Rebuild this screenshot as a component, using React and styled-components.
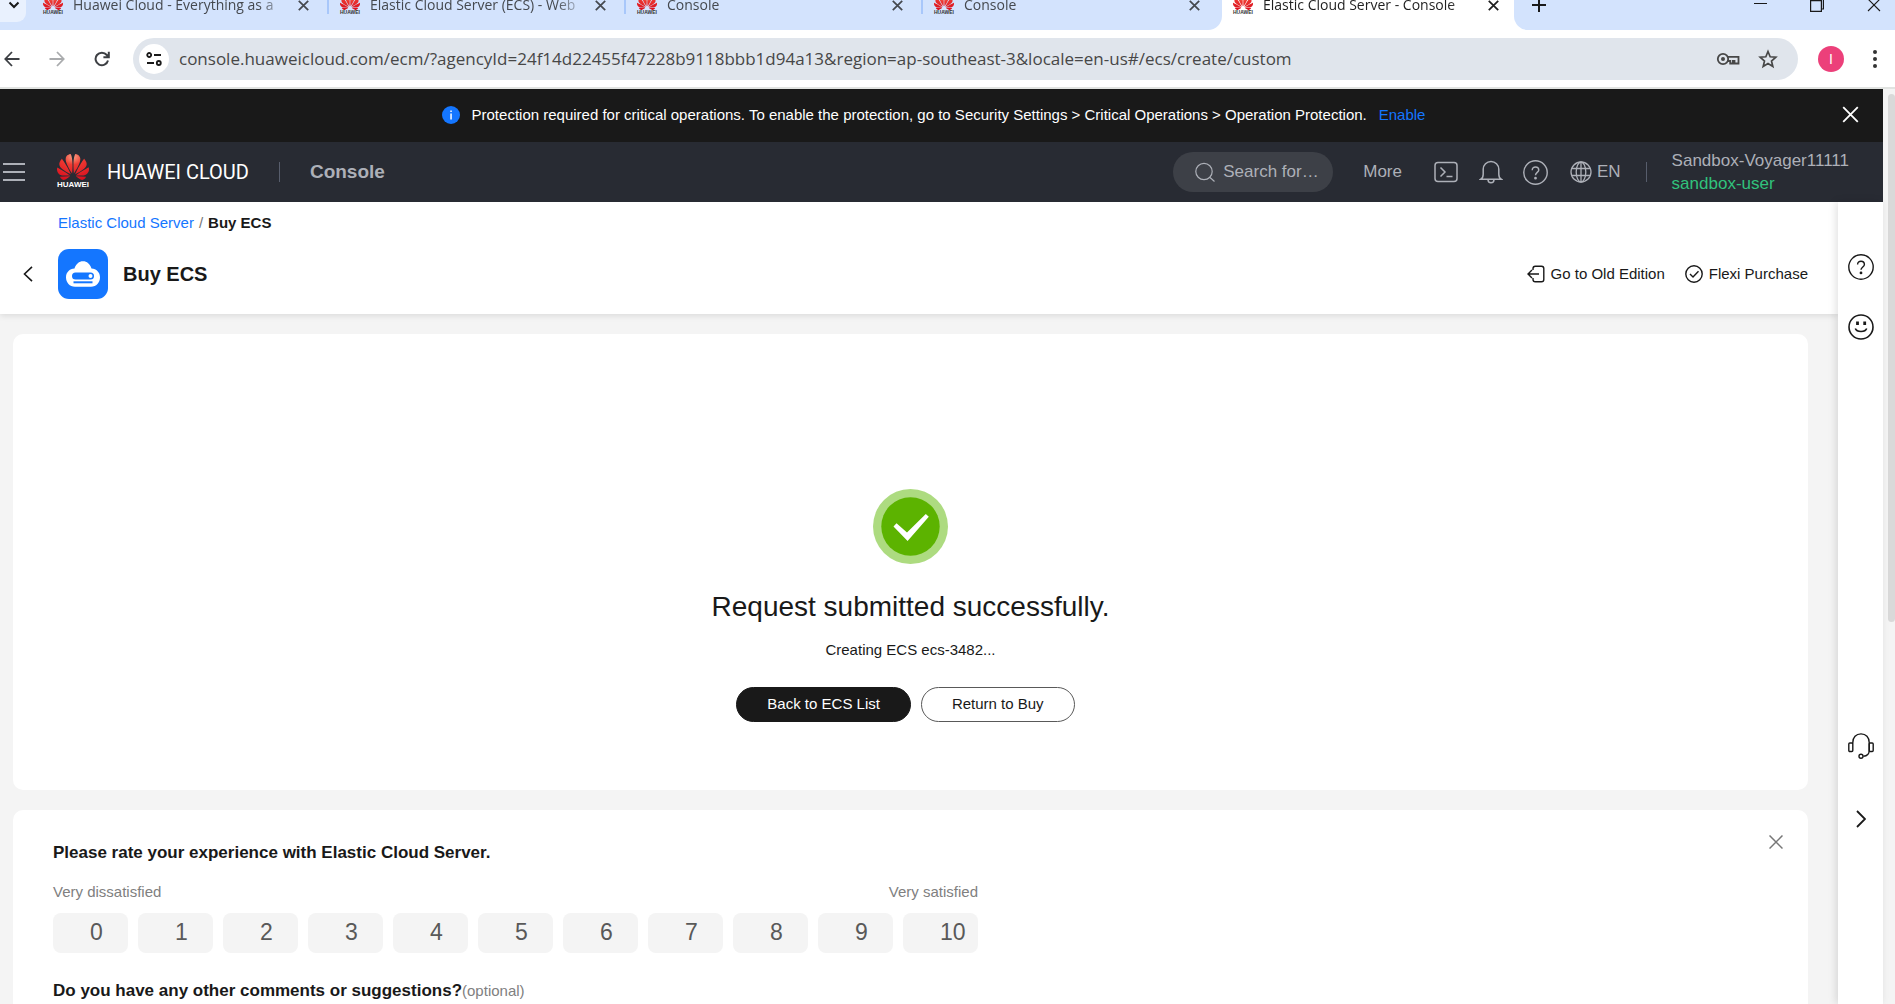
import React, { useState } from "react";
import styled, { createGlobalStyle } from "styled-components";

const ui = `"Liberation Sans", Arial, sans-serif`;
const chrome = `"Open Sans", "Noto Sans", sans-serif`;

const GlobalStyle = createGlobalStyle`
  *, *::before, *::after { box-sizing: border-box; }
  body { margin: 0; font-family: ${ui}; font-size: 15px; color: #191919; background: #f4f4f4; }
  button, input { font: inherit; color: inherit; }
  a { text-decoration: none; }
  h1, h2, h3, p { margin: 0; }
  svg { display: block; flex: none; }
`;

const Window = styled.div`
  height: 100vh;
  display: flex;
  flex-direction: column;
  overflow: hidden;
`;

/* ---------- browser tabs ---------- */

const TabStrip = styled.div`
  display: flex;
  height: 30px;
  flex: none;
  overflow: hidden;
  background: #fff;
  font-family: ${chrome};
`;

const TabGroup = styled.div`
  display: flex;
  align-items: flex-start;
  padding-right: 2px;
  background: #d3e3fd;
  border-radius: 0 0 14px 0;
`;

const TabSearch = styled.button`
  width: 26px;
  height: 22px;
  margin-right: 6px;
  padding: 0 0 12px 2px;
  border: 0;
  border-radius: 0 0 9px 0;
  background: #e9f1fe;
  display: flex;
  align-items: center;
  justify-content: center;
`;

const Tab = styled.div`
  display: flex;
  align-items: center;
  width: ${(p) => (p.$active ? 292 : 297)}px;
  height: 10px;
  padding-left: 11px;
  color: ${(p) => (p.$active ? "#1f1f1f" : "#45494f")};
`;

const TabTitle = styled.span`
  width: 208px;
  margin: 0 15px 0 10px;
  font-size: 14px;
  line-height: 20px;
  white-space: nowrap;
  overflow: hidden;
  mask-image: linear-gradient(to right, #000 186px, transparent 216px);
`;

const TabDivider = styled.span`
  width: 2px;
  height: 18px;
  margin-left: auto;
  background: #a8c7fa;
`;

const IconButton = styled.button`
  display: flex;
  align-items: center;
  justify-content: center;
  flex: none;
  padding: 0;
  border: 0;
  background: none;
  width: ${(p) => p.$size || 24}px;
  height: ${(p) => p.$size || 24}px;
`;

const StripEnd = styled.div`
  display: flex;
  align-items: center;
  flex: 1;
  padding: 0 9px 20px 13px;
  background: #d3e3fd;
  border-radius: 0 0 0 14px;
`;

const WindowControls = styled.div`
  display: flex;
  gap: 33px;
  margin-left: auto;
`;

/* ---------- browser toolbar ---------- */

const Toolbar = styled.div`
  display: flex;
  align-items: center;
  flex: none;
  height: 59px;
  padding-right: 18px;
  background: #fff;
  border-bottom: 2px solid #e1e3e1;
`;

const NavButtons = styled.div`
  display: flex;
  gap: 22px;
  margin-right: 20px;
  color: #3c3f43;
`;

const AddressBar = styled.form`
  display: flex;
  align-items: center;
  flex: 1;
  height: 42px;
  padding: 0 18px 0 6px;
  border-radius: 21px;
  background: #e0e5ec;
`;

const SiteInfo = styled(IconButton)`
  border-radius: 50%;
  background: #fff;
`;

const Address = styled.input`
  flex: 1;
  min-width: 0;
  margin-left: 10px;
  padding: 0;
  border: 0;
  outline: 0;
  color: #474747;
  background: none;
  font-family: ${chrome};
  font-size: 17px;
  line-height: 24px;
`;

const AddressActions = styled.div`
  display: flex;
  gap: 16px;
  color: #474747;
`;

const Avatar = styled.button`
  width: 26px;
  height: 26px;
  margin: 0 29px 0 20px;
  padding: 0;
  border: 0;
  border-radius: 50%;
  background: #ec407a;
  color: #fff;
  font-size: 14px;
  line-height: 26px;
`;

/* ---------- page shell ---------- */

const Viewport = styled.div`
  display: flex;
  flex: 1;
  min-height: 0;
`;

const Page = styled.div`
  display: flex;
  flex-direction: column;
  flex: 1;
  min-width: 0;
`;

const ScrollTrack = styled.div`
  width: 12px;
  padding: 5px 0 0 5px;
  background: #f4f4f4;
`;

const ScrollThumb = styled.div`
  height: 58%;
  border-radius: 4px;
  background: #d9d9d9;
`;

const Notice = styled.div`
  display: flex;
  align-items: center;
  flex: none;
  height: 53px;
  padding: 0 21px 2px 29px;
  background: #191919;
  color: #fff;
  line-height: 22px;
`;

const NoticeBody = styled.div`
  display: flex;
  align-items: center;
  justify-content: center;
  flex: 1;
  gap: 12px;
`;

const NoticeLink = styled.a`
  color: #1476ff;
`;

const Header = styled.header`
  display: flex;
  align-items: center;
  flex: none;
  height: 60px;
  padding: 0 34px 0 2px;
  background: #282b33;
  color: #adb0b8;
  font-size: 17px;
`;

const Brand = styled.a`
  display: flex;
  align-items: center;
  gap: 18px;
  margin-left: 31px;
  color: #fff;
  font-family: Roboto, sans-serif;
  font-size: 20px;
`;

const Mark = styled.span`
  display: flex;
  flex-direction: column;
  align-items: center;
  flex: none;
  width: ${(p) => (p.$small ? 20 : 32)}px;
  font-family: ${ui};
  font-weight: 700;
  font-size: ${(p) => (p.$small ? 5 : 8)}px;
  line-height: ${(p) => (p.$small ? 5 : 10)}px;
  color: ${(p) => (p.$small ? "#333" : "#fff")};
`;

const Divider = styled.span`
  width: 1px;
  height: 20px;
  background: #575d6c;
`;

const ConsoleLink = styled.a`
  color: #adb0b8;
  font-size: 19px;
  font-weight: 700;
`;

const BrandGroup = styled.div`
  display: flex;
  align-items: center;
  gap: 30px;
  margin-right: auto;
`;

const Search = styled.label`
  display: flex;
  align-items: center;
  gap: 8px;
  width: 160px;
  height: 40px;
  padding: 0 8px 0 22px;
  border-radius: 20px;
  background: #3d4047;
`;

const SearchInput = styled.input`
  flex: 1;
  min-width: 0;
  padding: 0;
  border: 0;
  outline: 0;
  background: none;
  color: #adb0b8;
  &::placeholder { color: #adb0b8; opacity: 1; }
`;

const More = styled.button`
  margin: 0 31px 0 30px;
  padding: 0;
  border: 0;
  background: none;
`;

const HeaderIcons = styled.div`
  display: flex;
  align-items: center;
  gap: 19px;
`;

const Language = styled.button`
  display: flex;
  align-items: center;
  gap: 5px;
  margin: 0 25px 0 2px;
  padding: 0;
  border: 0;
  background: none;
`;

const Account = styled.div`
  margin-left: 25px;
  line-height: 23px;
`;

const UserLink = styled.a`
  display: block;
  color: #31c27c;
`;

const Body = styled.div`
  display: flex;
  flex: 1;
  min-height: 0;
`;

const Content = styled.div`
  flex: 1;
  min-width: 0;
  overflow: hidden;
`;

const PageHead = styled.div`
  padding: 10px 30px 15px 18px;
  background: #fff;
  box-shadow: 0 2px 6px rgba(0, 0, 0, 0.1);
`;

const Breadcrumb = styled.nav`
  display: flex;
  gap: 5px;
  padding-left: 40px;
  line-height: 22px;
  color: #777;
`;

const CrumbLink = styled.a`
  color: #1476ff;
`;

const CrumbCurrent = styled.strong`
  color: #191919;
`;

const TitleRow = styled.div`
  display: flex;
  align-items: center;
  margin-top: 15px;
`;

const ServiceIcon = styled.span`
  display: flex;
  align-items: center;
  justify-content: center;
  width: 50px;
  height: 50px;
  margin: 0 15px 0 20px;
  border-radius: 11px;
  background: #1476ff;
`;

const Title = styled.h1`
  margin-right: auto;
  font-size: 20px;
  line-height: 28px;
`;

const HeadActions = styled.div`
  display: flex;
  gap: 20px;
`;

const HeadLink = styled.a`
  display: flex;
  align-items: center;
  gap: 6px;
  color: #191919;
  line-height: 22px;
`;

const Cards = styled.main`
  display: flex;
  flex-direction: column;
  gap: 20px;
  padding: 20px 30px 20px 13px;
`;

const ResultCard = styled.section`
  display: flex;
  flex-direction: column;
  align-items: center;
  padding: 155px 0 68px;
  border-radius: 10px;
  background: #fff;
`;

const ResultTitle = styled.h2`
  margin-top: 25px;
  font-size: 28px;
  font-weight: 400;
  line-height: 36px;
`;

const ResultText = styled.p`
  margin-top: 14px;
  line-height: 22px;
`;

const ResultButtons = styled.div`
  display: flex;
  gap: 10px;
  margin-top: 26px;
  padding-right: 10px;
`;

const Button = styled.button`
  height: 35px;
  padding: 0 30px 2px;
  border: 1px solid ${(p) => (p.$primary ? "#191919" : "#595959")};
  border-radius: 18px;
  background: ${(p) => (p.$primary ? "#191919" : "#fff")};
  color: ${(p) => (p.$primary ? "#fff" : "#191919")};
`;

const FeedbackCard = styled.section`
  display: flex;
  align-items: flex-start;
  justify-content: space-between;
  padding: 20px 20px 40px 40px;
  border-radius: 10px;
  background: #fff;
`;

const FeedbackForm = styled.form`
  padding-top: 11px;
`;

const Question = styled.h3`
  font-size: 17px;
  line-height: 24px;
`;

const Scale = styled.div`
  display: flex;
  justify-content: space-between;
  margin: 16px 0 10px;
  color: #808080;
  line-height: 22px;
`;

const Ratings = styled.div`
  display: flex;
  gap: 10px;
  margin-bottom: 26px;
`;

const Rating = styled.label`
  display: flex;
  align-items: center;
  width: 75px;
  height: 40px;
  padding: 0 0 2px 16px;
  border-radius: 8px;
  background: ${(p) => (p.$checked ? "#d6d6d6" : "#f4f4f4")};
  color: #595959;
  font-size: 23px;
`;

const RatingInput = styled.input`
  appearance: none;
  width: 21px;
  height: 20px;
  margin: 0;
`;

const Optional = styled.span`
  color: #808080;
  font-size: 15px;
  font-weight: 400;
`;

const Rail = styled.aside`
  display: flex;
  flex-direction: column;
  align-items: center;
  width: 45px;
  padding: 50px 0 170px;
  background: #fff;
  box-shadow: -2px 0 8px rgba(0, 0, 0, 0.12);
  z-index: 1;
`;

const RailTop = styled.div`
  display: grid;
  gap: 30px;
`;

const RailBottom = styled.div`
  display: grid;
  gap: 43px;
  margin-top: auto;
`;

/* ---------- icons ---------- */

const Icon = ({ w = 24, h = w, box = "0 0 24 24", sw = 1.5, children }) => (
  <svg width={w} height={h} viewBox={box} fill="none" stroke="currentColor" strokeWidth={sw} aria-hidden="true">
    {children}
  </svg>
);

const Petals = ({ w, h, id }) => (
  <svg width={w} height={h} viewBox="0 2.9 24 18.2" preserveAspectRatio="none" aria-hidden="true">
    <defs>
      <radialGradient id={id} cx="0.5" cy="0.1" r="0.9">
        <stop offset="0" stopColor="#f9a184" />
        <stop offset="0.35" stopColor="#ee3a32" />
        <stop offset="1" stopColor="#d9101f" />
      </radialGradient>
    </defs>
    <path
      fill={`url(#${id})`}
      d="M3.67 6.14S1.82 7.91 1.72 9.78v.35c.08 1.51 1.22 2.4 1.22 2.4 1.83 1.79 6.26 4.04 7.3 4.55 0 0 .06.03.1-.01l.02-.04v-.04C7.52 10.8 3.67 6.14 3.67 6.14zM9.65 18.6c-.02-.08-.1-.08-.1-.08l-7.38.26c.8 1.43 2.15 2.53 3.56 2.2.96-.25 3.16-1.78 3.88-2.3.06-.05.04-.09.04-.09zm.08-.78C6.49 15.63.21 12.28.21 12.28c-.15.46-.2.9-.21 1.3v.07c0 1.07.4 1.82.4 1.82.8 1.69 2.34 2.2 2.34 2.2.7.3 1.4.31 1.4.31.12.02 4.4 0 5.54 0 .05 0 .08-.05.08-.05v-.06c0-.03-.03-.05-.03-.05zM9.06 3.19a3.42 3.42 0 00-2.57 3.15v.41c.03.6.16 1.05.16 1.05.66 2.9 3.86 7.65 4.55 8.65.05.05.1.03.1.03a.1.1 0 00.06-.1c1.06-10.6-1.11-13.42-1.11-13.42-.32.02-1.19.23-1.19.23zm8.3 2.27s-.49-1.8-2.44-2.28c0 0-.57-.14-1.17-.22 0 0-2.18 2.81-1.12 13.43.01.07.06.08.06.08.07.03.1-.03.1-.03.72-1.03 3.9-5.76 4.55-8.64 0 0 .36-1.4.02-2.34zm-2.92 13.07s-.07 0-.09.05c0 0-.01.07.03.1.7.51 2.85 2 3.88 2.3 0 0 .16.05.43.06h.14c.69-.02 1.9-.37 3-2.26l-7.4-.25zm7.83-8.41c.14-2.06-1.94-3.97-1.94-3.98 0 0-3.85 4.66-6.67 10.8 0 0-.03.08.02.13l.04.01h.06c1.06-.53 5.46-2.77 7.28-4.54 0 0 1.15-.93 1.21-2.42zm1.52 2.14s-6.28 3.37-9.52 5.55c0 0-.05.04-.03.11 0 0 .03.06.07.06 1.16 0 5.56 0 5.67-.02 0 0 .57-.02 1.27-.29 0 0 1.56-.5 2.37-2.27 0 0 .73-1.45.17-3.14z"
    />
  </svg>
);

const Favicon = ({ id }) => (
  <Mark $small>
    <Petals w={20} h={15} id={id} />
    HUAWEI
  </Mark>
);

const Cross = ({ size = 14, sw = 1.5 }) => (
  <Icon w={size} box="0 0 14 14" sw={sw}>
    <path d="M1 1l12 12M13 1L1 13" />
  </Icon>
);

const HelpGlyph = ({ size, sw }) => (
  <Icon w={size} box="0 0 26 26" sw={sw}>
    <circle cx="13" cy="13" r="12.2" />
    <path d="M9.6 10.6c0-2.1 1.5-3.4 3.4-3.4s3.4 1.3 3.4 3.2c0 2.4-3.4 2.7-3.4 5.4" />
    <circle cx="13" cy="18.9" r=".7" fill="currentColor" />
  </Icon>
);

const tabs = [
  "Huawei Cloud - Everything as a",
  "Elastic Cloud Server (ECS) - Web",
  "Console",
  "Console",
];

const scores = Array.from({ length: 11 }, (_, n) => n);

function BrowserTabs() {
  return (
    <TabStrip>
      <TabGroup>
        <TabSearch aria-label="Search tabs">
          <Icon w={12} box="0 0 12 12" sw={2}><path d="M1.5 3.5L6 8l4.5-4.5" /></Icon>
        </TabSearch>
        {tabs.map((title, i) => (
          <Tab key={i}>
            <Favicon id={`tab-${i}`} />
            <TabTitle>{title}</TabTitle>
            <IconButton $size={14} aria-label="Close tab"><Cross size={11} sw={2.2} /></IconButton>
            {i < tabs.length - 1 && <TabDivider />}
          </Tab>
        ))}
      </TabGroup>
      <Tab $active>
        <Favicon id="tab-active" />
        <TabTitle>Elastic Cloud Server - Console</TabTitle>
        <IconButton $size={14} aria-label="Close tab"><Cross size={11} sw={2.2} /></IconButton>
      </Tab>
      <StripEnd>
        <IconButton aria-label="New tab">
          <Icon w={14} box="0 0 14 14" sw={2}><path d="M7 0v14M0 7h14" /></Icon>
        </IconButton>
        <WindowControls>
          <IconButton aria-label="Minimize">
            <Icon w={14} box="0 0 14 14" sw={1}><path d="M1 5.5h13" /></Icon>
          </IconButton>
          <IconButton aria-label="Restore">
            <Icon w={14} box="0 0 14 14" sw={1.2}><path d="M.6 2.6h10.800v10.800H.6zM3 2.600V.6h10.400v10.400h-2" /></Icon>
          </IconButton>
          <IconButton aria-label="Close window"><Cross size={14} sw={1.1} /></IconButton>
        </WindowControls>
      </StripEnd>
    </TabStrip>
  );
}

function BrowserToolbar() {
  return (
    <Toolbar>
      <NavButtons>
        <IconButton $size={23} aria-label="Back">
          <Icon w={16} box="0 0 16 16" sw={1.8}><path d="M15.5 8H1.5M8 1L1.3 8 8 15" /></Icon>
        </IconButton>
        <IconButton $size={23} aria-label="Forward" disabled>
          <Icon w={16} box="0 0 16 16" sw={1.8}><path stroke="#a9abad" d="M.5 8h14M8 1l6.7 7L8 15" /></Icon>
        </IconButton>
        <IconButton $size={23} aria-label="Reload">
          <Icon w={16} box="0 0 16 16" sw={2}><path d="M14 9.5A6.3 6.3 0 1 1 12.8 4L14.5 6M14.8 .8V6.2H9.4" /></Icon>
        </IconButton>
      </NavButtons>
      <AddressBar onSubmit={(e) => e.preventDefault()}>
        <SiteInfo type="button" $size={30} aria-label="Site information">
          <Icon w={16} box="0 0 16 16" sw={1.800}>
            <circle cx="3.2" cy="4" r="2" /><path d="M8 4h7M1 12h7" /><circle cx="12.8" cy="12" r="2" />
          </Icon>
        </SiteInfo>
        <Address
          aria-label="Address"
          spellCheck={false}
          defaultValue="console.huaweicloud.com/ecm/?agencyId=24f14d22455f47228b9118bbb1d94a13&region=ap-southeast-3&locale=en-us#/ecs/create/custom"
        />
        <AddressActions>
          <IconButton type="button" aria-label="Passwords">
            <Icon w={24} sw={1.800}>
              <circle cx="7" cy="12" r="5.2" /><circle cx="7" cy="12" r="2" fill="currentColor" stroke="none" />
              <path d="M11.500 9.800H22.500V16.500H18.500V14H16.800V16.500H14.200V14H11.800" />
            </Icon>
          </IconButton>
          <IconButton type="button" aria-label="Bookmark">
            <Icon w={20} sw={2}><path d="M12 3l2.6 6.3 6.8.6-5.200 4.500 1.600 6.600L12 17.400 6.200 21l1.600-6.600L2.600 9.900l6.800-.6z" /></Icon>
          </IconButton>
        </AddressActions>
      </AddressBar>
      <Avatar aria-label="Profile">I</Avatar>
      <IconButton $size={4} aria-label="Browser menu">
        <Icon w={4} h={18} box="0 0 4 18" sw={0}>
          <g fill="#333"><circle cx="2" cy="2" r="2" /><circle cx="2" cy="9" r="2" /><circle cx="2" cy="16" r="2" /></g>
        </Icon>
      </IconButton>
    </Toolbar>
  );
}

function ConsoleHeader() {
  return (
    <Header>
      <IconButton aria-label="Open menu">
        <Icon w={22} h={20} box="0 0 22 20" sw={2}><path d="M0 2h22M0 10h22M0 18h22" /></Icon>
      </IconButton>
      <BrandGroup>
        <Brand href="#">
          <Mark><Petals w={32} h={26} id="brand" />HUAWEI</Mark>
          HUAWEI CLOUD
        </Brand>
        <Divider />
        <ConsoleLink href="#">Console</ConsoleLink>
      </BrandGroup>
      <Search>
        <Icon w={20} box="0 0 20 20" sw={1.2}><circle cx="9" cy="9.500" r="8.200" /><path d="M15 15.500l4.500 4" /></Icon>
        <SearchInput type="text" aria-label="Search" placeholder="Search for…" />
      </Search>
      <More>More</More>
      <HeaderIcons>
        <IconButton $size={26} aria-label="CloudShell">
          <Icon w={24} sw={1.500}><rect x="1" y="2.500" width="22" height="19" rx="3" /><path d="M6.500 7.500l4.500 4.500-4.500 4.500M12.500 16.500h6" /></Icon>
        </IconButton>
        <IconButton $size={26} aria-label="Notifications">
          <Icon w={24} sw={1.500}><path d="M1.800 19.200c2-1.200 2.400-3 2.400-5V9.200a7.800 7.800 0 0 1 15.600 0v5c0 2 .4 3.800 2.400 5zM9 19.500c0 4.400 6 4.400 6 0" /></Icon>
        </IconButton>
        <IconButton $size={26} aria-label="Help"><HelpGlyph size={25} sw={1.500} /></IconButton>
        <Language>
          <Icon w={22} box="0 0 22 22" sw={1.300}>
            <circle cx="11" cy="11" r="10" /><ellipse cx="11" cy="11" rx="4.800" ry="10" /><path d="M11 1v20M1.700 7.500h18.600M1.700 14.500h18.600" />
          </Icon>
          EN
        </Language>
      </HeaderIcons>
      <Divider />
      <Account>
        Sandbox-Voyager11111
        <UserLink href="#">sandbox-user</UserLink>
      </Account>
    </Header>
  );
}

function Result() {
  return (
    <ResultCard>
      <svg width="75" height="75" viewBox="0 0 75 75" aria-hidden="true">
        <circle cx="37.5" cy="37.5" r="37.500" fill="#addb80" />
        <circle cx="37.5" cy="37.500" r="29.200" fill="#5cb300" />
        <path d="M20.500 37.500l3-3.200L34 43.500 52.800 25l3 2.800L34.600 52z" fill="#fff" />
      </svg>
      <ResultTitle>Request submitted successfully.</ResultTitle>
      <ResultText>Creating ECS ecs-3482...</ResultText>
      <ResultButtons>
        <Button $primary>Back to ECS List</Button>
        <Button>Return to Buy</Button>
      </ResultButtons>
    </ResultCard>
  );
}

function Feedback() {
  const [score, setScore] = useState(null);
  return (
    <FeedbackCard>
      <FeedbackForm>
        <Question>Please rate your experience with Elastic Cloud Server.</Question>
        <Scale><span>Very dissatisfied</span><span>Very satisfied</span></Scale>
        <Ratings role="radiogroup" aria-label="Rating">
          {scores.map((n) => (
            <Rating key={n} $checked={score === n}>
              <RatingInput type="radio" name="score" checked={score === n} onChange={() => setScore(n)} />
              {n}
            </Rating>
          ))}
        </Ratings>
        <Question>
          Do you have any other comments or suggestions?<Optional>(optional)</Optional>
        </Question>
      </FeedbackForm>
      <IconButton aria-label="Close feedback"><Icon w={14} box="0 0 14 14" sw={1.500}><path stroke="#777" d="M.5 .5l13 13M13.500 .5l-13 13" /></Icon></IconButton>
    </FeedbackCard>
  );
}

export default function App() {
  return (
    <Window>
      <GlobalStyle />
      <BrowserTabs />
      <BrowserToolbar />
      <Viewport>
        <Page>
          <Notice>
            <NoticeBody>
              <Icon w={18} box="0 0 18 18" sw={0}>
                <circle cx="9" cy="9" r="9" fill="#1476ff" />
                <path fill="#fff" d="M8.300 7.500h1.500v6H8.300zM8.300 4.500h1.500V6H8.300z" />
              </Icon>
              <span>
                Protection required for critical operations. To enable the protection, go to Security Settings &gt; Critical
                Operations &gt; Operation Protection.
              </span>
              <NoticeLink href="#">Enable</NoticeLink>
            </NoticeBody>
            <IconButton aria-label="Dismiss notice"><Cross size={17} sw={1.500} /></IconButton>
          </Notice>
          <ConsoleHeader />
          <Body>
            <Content>
              <PageHead>
                <Breadcrumb>
                  <CrumbLink href="#">Elastic Cloud Server</CrumbLink>/<CrumbCurrent>Buy ECS</CrumbCurrent>
                </Breadcrumb>
                <TitleRow>
                  <IconButton $size={20} aria-label="Go back">
                    <Icon w={10} h={16} box="0 0 10 16" sw={1.600}><path d="M9 .8L1.500 8 9 15.200" /></Icon>
                  </IconButton>
                  <ServiceIcon>
                    <svg width="34" height="26" viewBox="0 0 34 26" aria-hidden="true">
                      <path fill="#fff" d="M8.500 7.500C10 3 13 .3 17 .3S24 3 25.500 7.500c5 .3 8.500 3.800 8.500 8.800 0 5.300-3.700 9.500-9 9.500H9c-5.300 0-9-4.200-9-9.500 0-5 3.500-8.500 8.500-8.800z" />
                      <rect x="6" y="11.500" width="22" height="7" rx="3.500" fill="#1476ff" />
                      <circle cx="24.500" cy="15" r="2" fill="#fff" />
                      <path stroke="#1476ff" strokeWidth="2" d="M7.500 21.300h19" />
                    </svg>
                  </ServiceIcon>
                  <Title>Buy ECS</Title>
                  <HeadActions>
                    <HeadLink href="#">
                      <Icon w={18} box="0 0 18 18" sw={1.400}>
                        <path d="M6 5V3.500C6 2 6.800 1.200 8.300 1.200h6.200c1.500 0 2.300.8 2.300 2.300v11c0 1.500-.8 2.300-2.300 2.300H8.300C6.800 16.800 6 16 6 14.500V13M12 9H1M5 5L1 9l4 4" />
                      </Icon>
                      Go to Old Edition
                    </HeadLink>
                    <HeadLink href="#">
                      <Icon w={18} box="0 0 18 18" sw={1.400}><circle cx="9" cy="9" r="8.200" /><path d="M5 9l3 3 5.500-5.800" /></Icon>
                      Flexi Purchase
                    </HeadLink>
                  </HeadActions>
                </TitleRow>
              </PageHead>
              <Cards>
                <Result />
                <Feedback />
              </Cards>
            </Content>
            <Rail>
              <RailTop>
                <IconButton $size={30} aria-label="Help"><HelpGlyph size={26} sw={1.400} /></IconButton>
                <IconButton $size={30} aria-label="Feedback">
                  <Icon w={26} box="0 0 26 26" sw={1.600}>
                    <circle cx="13" cy="13" r="12" /><path d="M7.300 14.500c1.500 4 9.900 4 11.400 0" />
                    <path strokeWidth="2.800" d="M9.500 7.500v3.500M16.700 7.500v3.500" />
                  </Icon>
                </IconButton>
              </RailTop>
              <RailBottom>
                <IconButton $size={30} aria-label="Support">
                  <Icon w={26} box="0 0 26 26" sw={1.400}>
                    <rect x=".8" y="10" width="4" height="8.500" rx="1" /><rect x="21.200" y="10" width="4" height="8.500" rx="1" />
                    <path d="M4.800 10.500V9.500C4.800 4.500 8 .9 13 .9s8.200 3.600 8.200 8.600v8c0 3-2.200 5.500-5.800 5.800" /><circle cx="13" cy="23.300" r="2" />
                  </Icon>
                </IconButton>
                <IconButton $size={30} aria-label="Expand panel">
                  <Icon w={10} h={18} box="0 0 10 18" sw={1.800}><path d="M1 1l8 8-8 8" /></Icon>
                </IconButton>
              </RailBottom>
            </Rail>
          </Body>
        </Page>
        <ScrollTrack><ScrollThumb /></ScrollTrack>
      </Viewport>
    </Window>
  );
}
